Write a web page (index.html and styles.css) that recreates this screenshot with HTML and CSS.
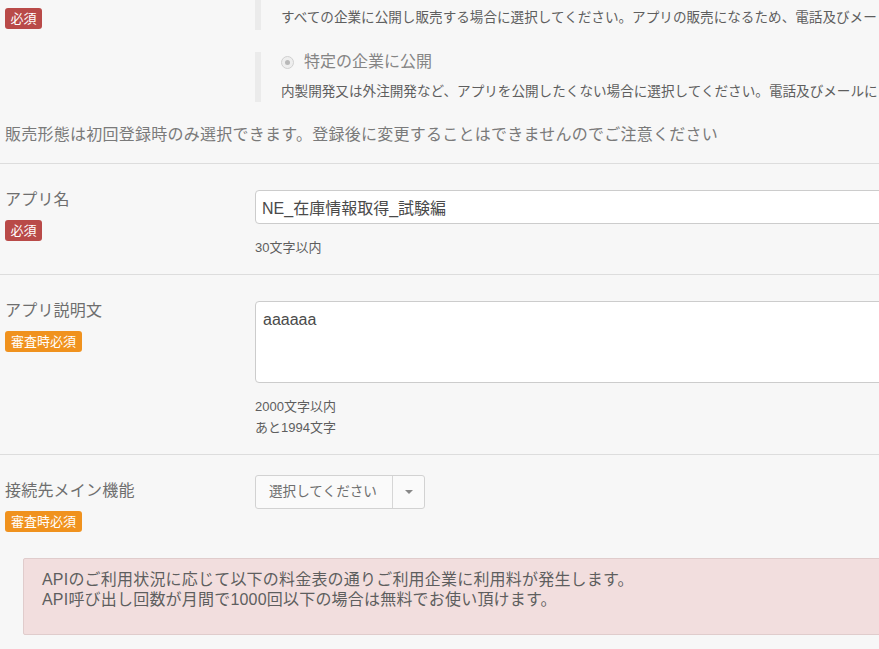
FILE: index.html
```html
<!DOCTYPE html>
<html lang="ja">
<head>
<meta charset="utf-8">
<title>アプリ登録</title>
<link rel="stylesheet" href="styles.css">
</head>
<body>
<div class="page">
  <section class="row row-first">
    <div class="row-grid">
      <div class="label-col label-col-first">
        <span class="badge badge-required">必須</span>
      </div>
      <div class="field-col">
        <div class="option option-cut">
          <p class="option-desc">すべての企業に公開し販売する場合に選択してください。アプリの販売になるため、電話及びメー</p>
        </div>
        <div class="option">
          <div class="option-label"><span class="radio"><span class="radio-dot"></span></span><span>特定の企業に公開</span></div>
          <p class="option-desc">内製開発又は外注開発など、アプリを公開したくない場合に選択してください。電話及びメールに</p>
        </div>
      </div>
    </div>
    <p class="note">販売形態は初回登録時のみ選択できます。登録後に変更することはできませんのでご注意ください</p>
  </section>

  <section class="row">
    <div class="row-grid">
      <div class="label-col">
        <div class="label">アプリ名</div>
        <span class="badge badge-required">必須</span>
      </div>
      <div class="field-col">
        <input class="text-input" type="text" value="NE_在庫情報取得_試験編" readonly>
        <div class="help">30文字以内</div>
      </div>
    </div>
  </section>

  <section class="row">
    <div class="row-grid">
      <div class="label-col">
        <div class="label">アプリ説明文</div>
        <span class="badge badge-review">審査時必須</span>
      </div>
      <div class="field-col">
        <textarea class="text-area" readonly>aaaaaa</textarea>
        <div class="help">2000文字以内</div>
        <div class="help help-tight">あと1994文字</div>
      </div>
    </div>
  </section>

  <section class="row row-last">
    <div class="row-grid">
      <div class="label-col">
        <div class="label">接続先メイン機能</div>
        <span class="badge badge-review">審査時必須</span>
      </div>
      <div class="field-col">
        <button class="select" type="button">
          <span class="select-text">選択してください</span>
          <span class="select-caret"><span class="caret"></span></span>
        </button>
      </div>
    </div>
    <div class="alert">
      <p>APIのご利用状況に応じて以下の料金表の通りご利用企業に利用料が発生します。</p>
      <p>API呼び出し回数が月間で1000回以下の場合は無料でお使い頂けます。</p>
    </div>
  </section>
</div>
</body>
</html>
```

FILE: styles.css
```css
html, body {
  margin: 0;
  padding: 0;
}

body {
  background: #f7f7f7;
  font-family: "Liberation Sans", "Noto Sans CJK JP", sans-serif;
  color: #5e5e5e;
  overflow: hidden;
  width: 879px;
  height: 649px;
}

.page {
  width: 1160px;
}

p {
  margin: 0;
}

.row {
  border-top: 1px solid #dddddd;
  padding: 26px 0 16px;
}

.row-first {
  border-top: none;
  padding: 0 0 18px;
}

.row-last {
  padding-bottom: 20px;
}

.row-grid {
  display: grid;
  grid-template-columns: 255px 1fr;
}

.label-col {
  padding-left: 5px;
  display: flex;
  flex-direction: column;
  align-items: flex-start;
}

.label-col-first {
  padding-top: 8px;
}

.label {
  font-size: 16px;
  line-height: 20px;
  color: #6e6e6e;
  margin-bottom: 10px;
  letter-spacing: 0.2px;
}

.badge {
  display: inline-block;
  font-size: 13px;
  line-height: 21px;
  height: 21px;
  color: #fff;
  border-radius: 3px;
  padding: 0 5.5px;
}

.badge-required {
  background: #b94a48;
}

.badge-review {
  background: #f0921e;
  padding: 0 6px;
}

/* radio options */
.option {
  border-left: 6px solid #ebebeb;
  padding-left: 20px;
}

.option + .option {
  margin-top: 22px;
}

.option-cut {
  padding-top: 8px;
  padding-bottom: 2px;
}

.option-label {
  display: flex;
  align-items: center;
  gap: 10px;
  font-size: 16px;
  line-height: 20px;
  color: #858585;
  margin-bottom: 10px;
}

.radio {
  width: 13px;
  height: 13px;
  box-sizing: border-box;
  border-radius: 50%;
  border: 1px solid #d0d0d0;
  background: #eeeeee;
  display: flex;
  align-items: center;
  justify-content: center;
}

.radio-dot {
  width: 5px;
  height: 5px;
  border-radius: 50%;
  background: #b8b8b8;
}

.option-desc {
  font-size: 13.6px;
  line-height: 20px;
  color: #5e5e5e;
  white-space: nowrap;
}

.note {
  margin-top: 23px;
  padding-left: 5px;
  font-size: 16px;
  line-height: 20px;
  color: #7a7a7a;
  letter-spacing: 0.25px;
}

/* inputs */
.text-input {
  display: block;
  box-sizing: border-box;
  width: 100%;
  height: 34px;
  margin: 0;
  padding: 6px 6px;
  border: 1px solid #cccccc;
  border-radius: 4px;
  background: #fff;
  font-family: "Liberation Sans", "Noto Sans CJK JP", sans-serif;
  font-size: 16px;
  color: #4a4a4a;
  outline: none;
}

.text-area {
  display: block;
  box-sizing: border-box;
  width: 100%;
  height: 82px;
  margin: 0;
  padding: 8px 7px;
  border: 1px solid #cccccc;
  border-radius: 4px;
  background: #fff;
  font-family: "Liberation Sans", "Noto Sans CJK JP", sans-serif;
  font-size: 16px;
  line-height: 20px;
  color: #4a4a4a;
  resize: none;
  outline: none;
}

.help {
  margin-top: 13px;
  font-size: 13px;
  line-height: 21px;
  color: #5e5e5e;
}

.help-tight {
  margin-top: 0;
}

/* select */
.select {
  display: flex;
  align-items: stretch;
  box-sizing: border-box;
  width: 170px;
  height: 34px;
  margin: -6px 0 0;
  padding: 0;
  border: 1px solid #d2d2d2;
  border-radius: 3px;
  background: #fafafa;
  font-family: "Liberation Sans", "Noto Sans CJK JP", sans-serif;
  cursor: pointer;
}

.select-text {
  width: 137px;
  box-sizing: border-box;
  padding-left: 13px;
  text-align: left;
  font-size: 13.6px;
  line-height: 32px;
  color: #6e6e6e;
  border-right: 1px solid #d6d6d6;
}

.select-caret {
  flex: 1;
  display: flex;
  align-items: center;
  justify-content: center;
}

.caret {
  width: 0;
  height: 0;
  border-left: 4px solid transparent;
  border-right: 4px solid transparent;
  border-top: 4px solid #888;
}

/* alert */
.alert {
  margin: 26px 0 0 23px;
  padding: 11px 18px 24px;
  background: #f2dede;
  border: 1px solid #e0cccc;
  border-radius: 2px;
  font-size: 16px;
  line-height: 20px;
  color: #5e5e5e;
  letter-spacing: 0.2px;
}
```
